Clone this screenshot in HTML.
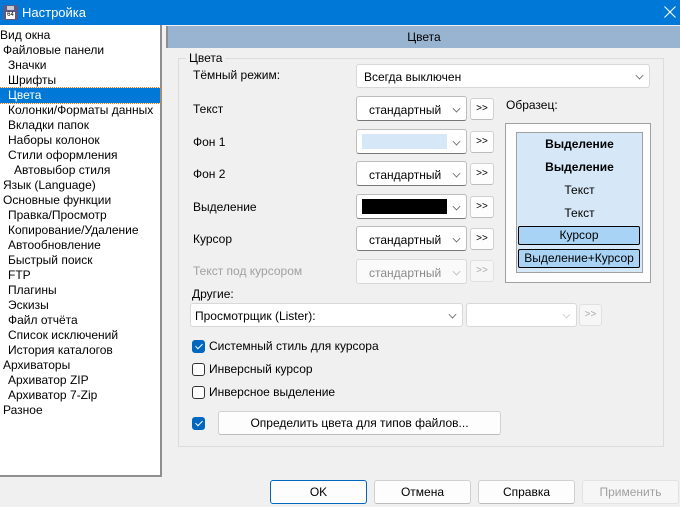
<!DOCTYPE html>
<html><head><meta charset="utf-8"><style>
*{box-sizing:border-box;margin:0;padding:0}
body{width:680px;height:507px;background:#f0f0f0;font-family:"Liberation Sans","DejaVu Sans",sans-serif;font-size:12px;color:#000;position:relative;overflow:hidden}
.a{position:absolute}
.title{left:0;top:0;width:680px;height:25px;background:#0078d7;color:#fff;font-size:13px}
.tree{left:0;top:25px;width:162px;height:452px;background:#fff;border-right:2px solid #8e8e8e;border-bottom:2px solid #8e8e8e}
.it{position:absolute;height:15px;line-height:15px;white-space:nowrap}
.hdr{left:166px;top:26px;width:514px;height:22px;background:#99b4d1;border-left:2px solid #8e8e8e;text-align:center;line-height:23px}
.grp{left:178px;top:58px;width:486px;height:389px;border:1px solid #dcdcdc}
.cb{position:absolute;background:#fff;border:1px solid #bdbdbd;border-bottom-color:#777;border-radius:3px}
.cb .v{position:absolute;right:6px;top:50%;margin-top:-4px;width:7px;height:7px;border-right:1px solid #666;border-bottom:1px solid #666;transform:rotate(45deg) scale(.8)}
.btn{position:absolute;background:#fdfdfd;border:1px solid #d0d0d0;border-bottom-color:#bcbcbc;border-radius:3px;text-align:center}
.chk{position:absolute;width:13px;height:13px;border:1px solid #333;border-radius:3px;background:#fff}
.chk.on{background:#0067c0;border-color:#0067c0}
.chk.on:after{content:"";position:absolute;left:4px;top:1px;width:3px;height:6px;border-right:1px solid #fff;border-bottom:1px solid #fff;transform:rotate(45deg)}
.lbl{position:absolute;white-space:nowrap}
.sm{position:absolute;left:0;width:125px;text-align:center;height:19px;line-height:19px}
</style></head><body>
<div class="a title">
 <div class="a" style="left:3px;top:5px;width:15px;height:15px;background:#5a5a8a;border-radius:2px"><div class="a" style="left:3px;top:7px;width:9px;height:7px;background:#fff;font-size:6px;line-height:7px;color:#000;text-align:center">64</div><div class="a" style="left:4px;top:1px;width:7px;height:4px;background:#ccc"></div></div>
 <div class="a" style="left:22px;top:5px">Настройка</div>
 <svg class="a" style="left:664px;top:6px" width="12" height="12" viewBox="0 0 12 12"><path d="M0.5 0.5L11.5 11.5M11.5 0.5L0.5 11.5" stroke="#fff" stroke-width="1.1" fill="none"/></svg>
</div>
<div class="a tree">
<div class="it" style="left:0;top:3px">Вид окна</div>
<div class="it" style="left:3px;top:18px">Файловые панели</div>
<div class="it" style="left:8px;top:33px">Значки</div>
<div class="it" style="left:8px;top:48px">Шрифты</div>
<div class="it" style="left:0;top:63px;width:160px;background:#0078d7;color:#fff;outline:1px dotted #e08020;padding-left:8px">Цвета</div>
<div class="it" style="left:8px;top:78px">Колонки/Форматы данных</div>
<div class="it" style="left:8px;top:93px">Вкладки папок</div>
<div class="it" style="left:8px;top:108px">Наборы колонок</div>
<div class="it" style="left:8px;top:123px">Стили оформления</div>
<div class="it" style="left:14px;top:138px">Автовыбор стиля</div>
<div class="it" style="left:3px;top:153px">Язык (Language)</div>
<div class="it" style="left:3px;top:168px">Основные функции</div>
<div class="it" style="left:8px;top:183px">Правка/Просмотр</div>
<div class="it" style="left:8px;top:198px">Копирование/Удаление</div>
<div class="it" style="left:8px;top:213px">Автообновление</div>
<div class="it" style="left:8px;top:228px">Быстрый поиск</div>
<div class="it" style="left:8px;top:243px">FTP</div>
<div class="it" style="left:8px;top:258px">Плагины</div>
<div class="it" style="left:8px;top:273px">Эскизы</div>
<div class="it" style="left:8px;top:288px">Файл отчёта</div>
<div class="it" style="left:8px;top:303px">Список исключений</div>
<div class="it" style="left:8px;top:318px">История каталогов</div>
<div class="it" style="left:3px;top:333px">Архиваторы</div>
<div class="it" style="left:8px;top:348px">Архиватор ZIP</div>
<div class="it" style="left:8px;top:363px">Архиватор 7-Zip</div>
<div class="it" style="left:3px;top:378px">Разное</div>
</div>
<div class="a hdr">Цвета</div>
<div class="a grp"></div>
<div class="lbl" style="left:186px;top:51px;background:#f0f0f0;padding:0 3px">Цвета</div>
<div class="lbl" style="left:193px;top:68px">Тёмный режим:</div>
<div class="cb" style="left:356px;top:64px;width:294px;height:24px;border-color:#d8d8d8"><span class="a" style="left:7px;top:5px">Всегда выключен</span><div class="v"></div></div>

<div class="lbl" style="left:193px;top:102px">Текст</div>
<div class="cb" style="left:356px;top:96px;width:111px;height:25px"><span class="a" style="left:12px;top:6px">стандартный</span><div class="v"></div></div>
<div class="btn" style="left:470px;top:98px;width:24px;height:22px;line-height:20px;font-size:10px">&gt;&gt;</div>

<div class="lbl" style="left:193px;top:135px">Фон 1</div>
<div class="cb" style="left:356px;top:129px;width:111px;height:25px"><div class="a" style="left:5px;top:4px;width:85px;height:15px;background:#d6e8f7"></div><div class="v"></div></div>
<div class="btn" style="left:470px;top:131px;width:24px;height:22px;line-height:20px;font-size:10px">&gt;&gt;</div>

<div class="lbl" style="left:193px;top:167px">Фон 2</div>
<div class="cb" style="left:356px;top:161px;width:111px;height:25px"><span class="a" style="left:12px;top:6px">стандартный</span><div class="v"></div></div>
<div class="btn" style="left:470px;top:163px;width:24px;height:22px;line-height:20px;font-size:10px">&gt;&gt;</div>

<div class="lbl" style="left:193px;top:200px">Выделение</div>
<div class="cb" style="left:356px;top:194px;width:111px;height:25px"><div class="a" style="left:5px;top:4px;width:85px;height:15px;background:#000"></div><div class="v"></div></div>
<div class="btn" style="left:470px;top:196px;width:24px;height:22px;line-height:20px;font-size:10px">&gt;&gt;</div>

<div class="lbl" style="left:193px;top:232px">Курсор</div>
<div class="cb" style="left:356px;top:226px;width:111px;height:25px"><span class="a" style="left:12px;top:6px">стандартный</span><div class="v"></div></div>
<div class="btn" style="left:470px;top:228px;width:24px;height:22px;line-height:20px;font-size:10px">&gt;&gt;</div>

<div class="lbl" style="left:193px;top:264px;color:#a0a0a0">Текст под курсором</div>
<div class="cb" style="left:356px;top:259px;width:111px;height:25px;border-color:#d8d8d8;background:#fafafa"><span class="a" style="left:12px;top:6px;color:#8a8a8a">стандартный</span><div class="v" style="border-color:#bbb"></div></div>
<div class="btn" style="left:470px;top:260px;width:24px;height:22px;line-height:20px;font-size:10px;color:#aaa;background:#f6f6f6;border-color:#e0e0e0">&gt;&gt;</div>

<div class="lbl" style="left:506px;top:98px">Образец:</div>
<div class="a" style="left:505px;top:123px;width:146px;height:160px;border:1px solid #a0a0a0;background:#fdfdfd"></div>
<div class="a" style="left:516px;top:132px;width:127px;height:141px;border:1px solid #a0a0a0;background:#d6e8f7">
 <div class="sm" style="top:2px;font-weight:bold">Выделение</div>
 <div class="sm" style="top:25px;font-weight:bold">Выделение</div>
 <div class="sm" style="top:48px">Текст</div>
 <div class="sm" style="top:71px">Текст</div>
 <div class="sm" style="top:93px;left:1px;width:122px;background:#a9d3f5;border:1px solid #000;border-radius:2px;line-height:17px">Курсор</div>
 <div class="sm" style="top:116px;left:1px;width:122px;background:#a9d3f5;border:1px solid #000;border-radius:2px;line-height:17px">Выделение+Курсор</div>
</div>

<div class="lbl" style="left:192px;top:287px">Другие:</div>
<div class="cb" style="left:190px;top:303px;width:273px;height:24px;border-color:#d8d8d8"><span class="a" style="left:4px;top:5px">Просмотрщик (Lister):</span><div class="v"></div></div>
<div class="cb" style="left:466px;top:303px;width:111px;height:24px;border-color:#d8d8d8"><div class="v" style="border-color:#ccc"></div></div>
<div class="btn" style="left:579px;top:304px;width:23px;height:22px;line-height:20px;font-size:10px;color:#aaa;background:#f6f6f6;border-color:#e0e0e0">&gt;&gt;</div>

<div class="chk on" style="left:192px;top:340px"></div><div class="lbl" style="left:209px;top:339px">Системный стиль для курсора</div>
<div class="chk" style="left:192px;top:363px"></div><div class="lbl" style="left:209px;top:362px">Инверсный курсор</div>
<div class="chk" style="left:192px;top:386px"></div><div class="lbl" style="left:209px;top:385px">Инверсное выделение</div>
<div class="chk on" style="left:192px;top:417px"></div>
<div class="btn" style="left:218px;top:411px;width:283px;height:24px;line-height:22px">Определить цвета для типов файлов...</div>

<div class="btn" style="left:270px;top:480px;width:97px;height:24px;line-height:22px;border:1px solid #0067c0">OK</div>
<div class="btn" style="left:374px;top:480px;width:97px;height:24px;line-height:22px">Отмена</div>
<div class="btn" style="left:478px;top:480px;width:97px;height:24px;line-height:22px">Справка</div>
<div class="btn" style="left:582px;top:480px;width:97px;height:24px;line-height:22px;color:#a0a0a0;background:#f6f6f6;border-color:#e2e2e2">Применить</div>
</body></html>
